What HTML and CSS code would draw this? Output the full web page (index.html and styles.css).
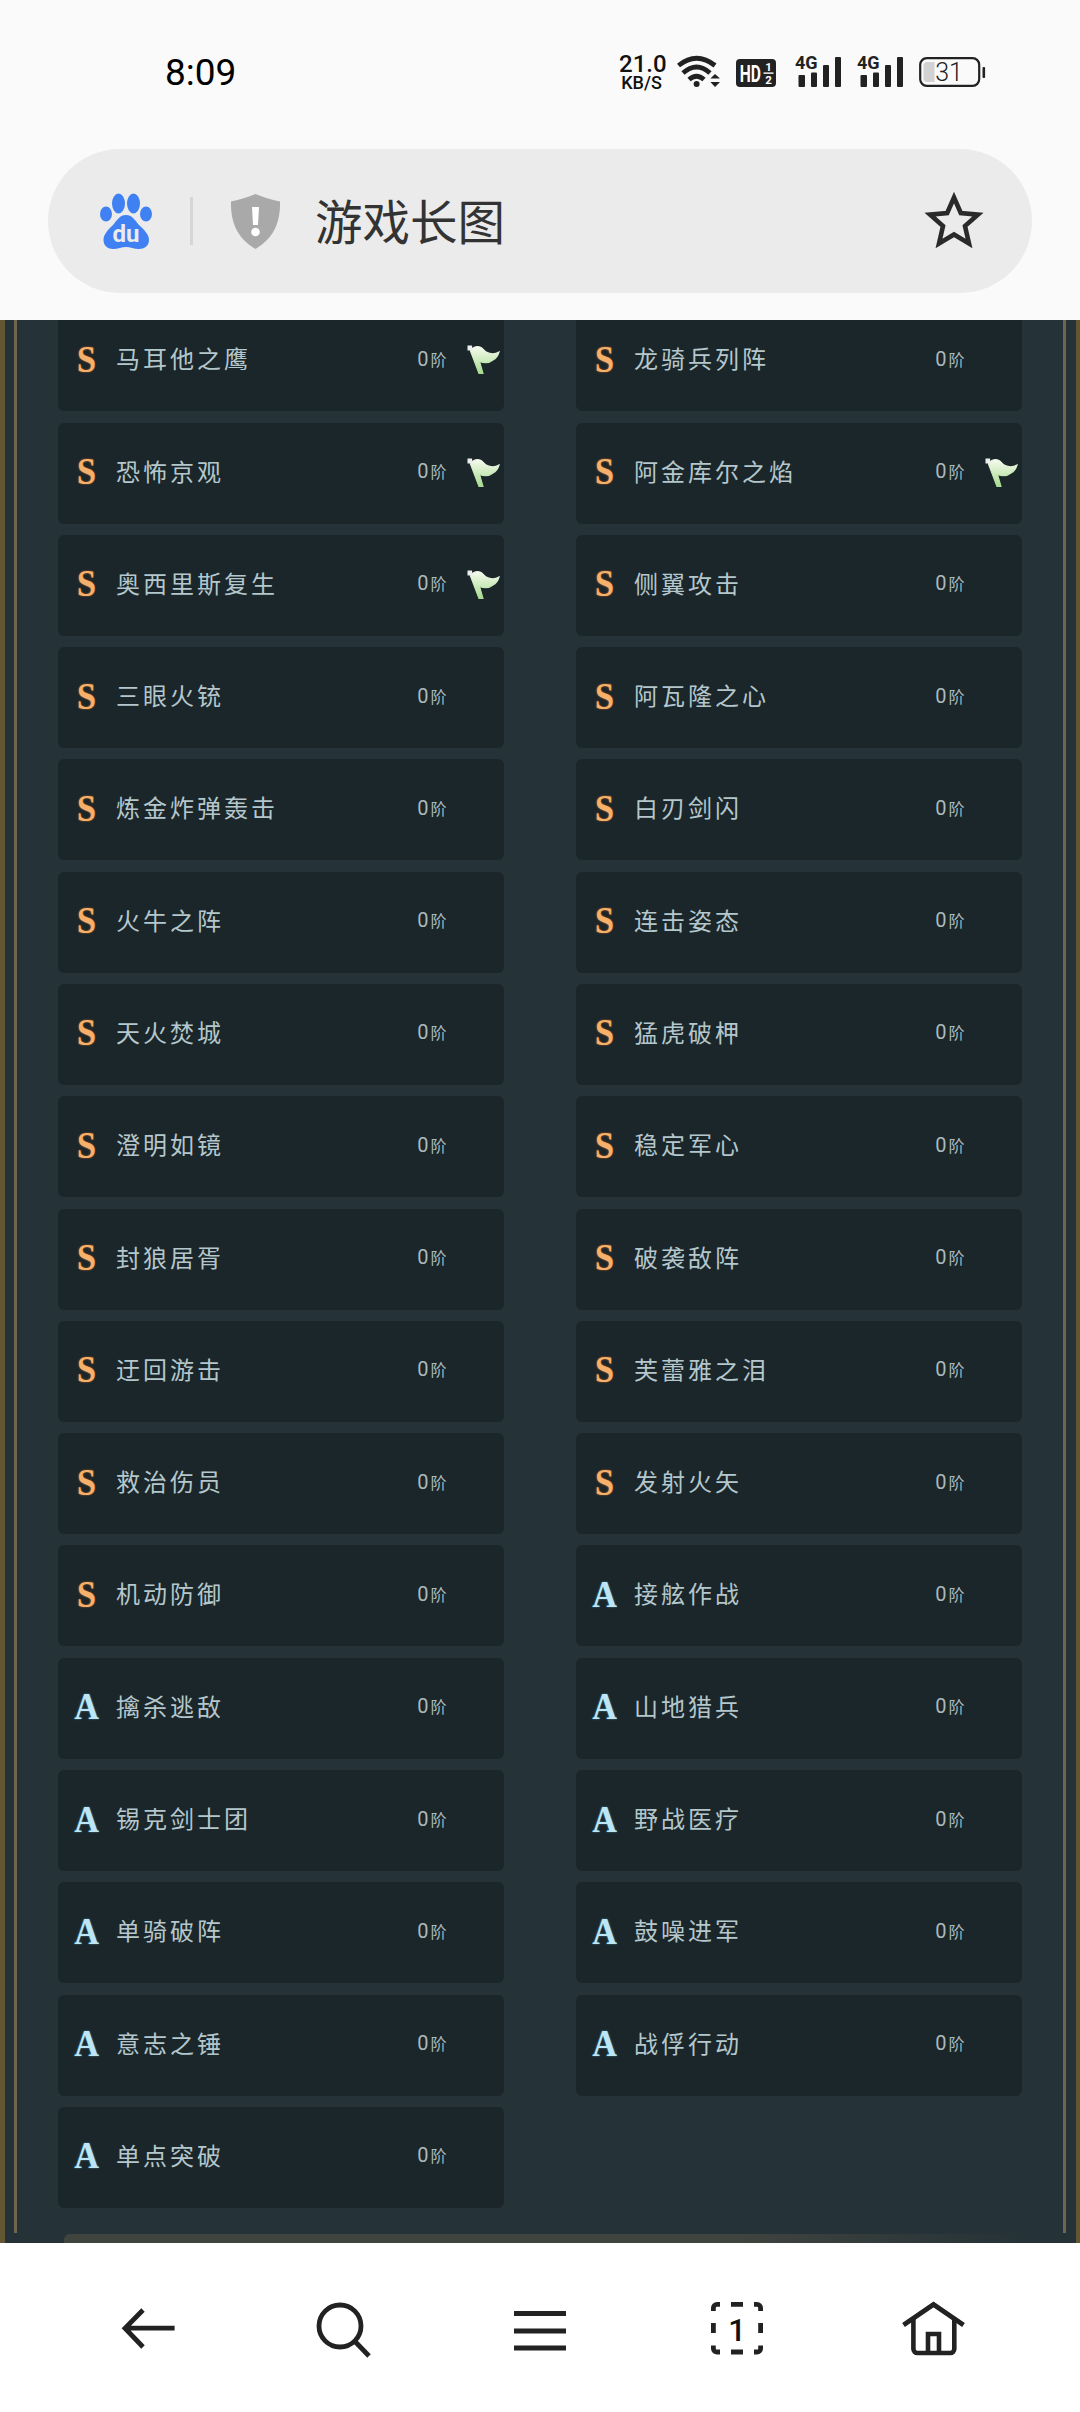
FILE: index.html
```html
<!DOCTYPE html>
<html lang="zh-CN">
<head>
    <meta charset="UTF-8">
    <meta name="viewport" content="width=device-width, initial-scale=1.0">
    <title>游戏长图</title>
    <link rel="stylesheet" href="styles.css">
</head>
<body>
    <svg class="defs" width="0" height="0">
        <defs>
            <linearGradient id="flagFill" x1="0" y1="0" x2="0" y2="1">
                <stop offset="0" stop-color="#f6faee"/>
                <stop offset="1" stop-color="#a6dc8e"/>
            </linearGradient>
            <symbol id="flag" viewBox="0 0 34 30">
                <path d="M4.5 7 C6 3.5 10 2 14 3 C17 4 18 7 20.7 8.3 C24 10 28 11 33 8 C32 11.5 30 14.5 27 16 C24 18.5 19 19.5 13.5 17.5 L17 29.5 L13 29.5 Z" fill="url(#flagFill)" stroke="url(#flagFill)" stroke-width="1.2"/>
                <rect x="1.5" y="1.5" width="4.6" height="5" fill="#eeeeee"/>
            </symbol>
        </defs>
    </svg>

    <header class="topbar">
        <div class="statusbar">
            <div class="time">8:09</div>
            <div class="status-icons">
                <div class="speed"><div class="speed-num">21.0</div><div class="speed-unit">KB/S</div></div>
                <svg class="wifi" width="43" height="32" viewBox="0 0 43 32">
                    <g fill="none" stroke="#222" stroke-width="4.8">
                        <path d="M1.5 10.5 Q19.6 -4 38 10.5"/>
                        <path d="M6 18 Q19.6 6 33 18"/>
                        <path d="M12 24.5 Q19.6 18 27 24.5"/>
                    </g>
                    <circle cx="19.6" cy="29" r="3" fill="#222"/>
                    <path d="M38 19 L43 23.5 H33.4 Z M33.4 27 H43 L38 32 Z" fill="#222"/>
                </svg>
                <svg class="hd" width="40" height="32" viewBox="0 0 40 32">
                    <rect x="0" y="4" width="40" height="28" rx="4" fill="#222"/>
                    <text x="5.5" y="27" class="hd-text" transform="scale(0.68 1)">HD</text>
                    <text x="32.5" y="16" class="hd-frac" text-anchor="middle">1</text>
                    <rect x="27.5" y="17.4" width="10" height="1.4" fill="#fff"/>
                    <text x="32.5" y="29" class="hd-frac" text-anchor="middle">2</text>
                </svg>
                <svg class="signal" width="46" height="32" viewBox="0 0 46 32">
                    <text x="0" y="14" class="sig-text">4G</text>
                    <rect x="3.5" y="20" width="6.5" height="12" rx="1" fill="#222"/>
                    <rect x="16" y="17.5" width="6" height="14.5" rx="1" fill="#222"/>
                    <rect x="28" y="10" width="6" height="22" rx="1" fill="#222"/>
                    <rect x="40" y="2" width="6" height="30" rx="1" fill="#222"/>
                </svg>
                <svg class="signal" width="46" height="32" viewBox="0 0 46 32">
                    <text x="0" y="14" class="sig-text">4G</text>
                    <rect x="3.5" y="20" width="6.5" height="12" rx="1" fill="#222"/>
                    <rect x="16" y="17.5" width="6" height="14.5" rx="1" fill="#222"/>
                    <rect x="28" y="10" width="6" height="22" rx="1" fill="#222"/>
                    <rect x="40" y="2" width="6" height="30" rx="1" fill="#222"/>
                </svg>
                <svg class="battery" width="67" height="32" viewBox="0 0 67 32">
                    <rect x="1.2" y="3.2" width="59" height="27.6" rx="6.5" fill="none" stroke="#222" stroke-width="2.2"/>
                    <path d="M8 7 H15.5 V27 H8 A3.5 3.5 0 0 1 4.5 23.5 V10.5 A3.5 3.5 0 0 1 8 7 Z" fill="#d2d2d2"/>
                    <text x="30" y="26" class="batt-text" text-anchor="middle">31</text>
                    <rect x="63.5" y="12" width="2.6" height="11" rx="1" fill="#222"/>
                </svg>
            </div>
        </div>
        <div class="urlbar">
            <svg class="baidu" width="52" height="56" viewBox="0 0 52 56">
                <g fill="#3f80f3">
                    <ellipse cx="6" cy="21" rx="6" ry="7.5"/>
                    <ellipse cx="18.5" cy="10.5" rx="6.5" ry="10"/>
                    <ellipse cx="33.5" cy="10.5" rx="6.5" ry="10"/>
                    <ellipse cx="46" cy="21" rx="6" ry="7.5"/>
                    <path d="M26 22 C20 22 17 27 13 32 C8 37 3.5 41 3.5 47 C3.5 53 8 56 13 56 C18 56 22 54 26 54 C30 54 34 56 39 56 C44 56 49 53 49 47 C49 41 44 37 39 32 C35 27 32 22 26 22 Z"/>
                </g>
                <text x="26" y="49" class="baidu-text" text-anchor="middle">du</text>
            </svg>
            <div class="divider"></div>
            <svg class="shield" width="49" height="55" viewBox="0 0 49 55">
                <path d="M24.5 0 C32 3 40 6 49 7.5 C49.5 28 43 44 24.5 55 C6 44 -0.5 28 0 7.5 C9 6 17 3 24.5 0 Z" fill="#a9a9a9"/>
                <path d="M21 13 H28 L27 31 H22 Z" fill="#fff"/>
                <circle cx="24.5" cy="38" r="4.3" fill="#fff"/>
            </svg>
            <div class="url-text">游戏长图</div>
            <svg class="star" width="60" height="58" viewBox="0 0 60 58">
                <path d="M30 5.5 L36.8 21 L54 22.6 L41 34 L45 51.5 L30 42.5 L15 51.5 L19 34 L6 22.6 L23.2 21 Z" fill="none" stroke="#2a2a2a" stroke-width="4.6"/>
            </svg>
        </div>
    </header>

    <main class="content">
        <div class="panel">
            <div class="skill-grid">
                <div class="skill"><span class="rank rank-s">S</span><span class="name">马耳他之鹰</span><span class="level">0<small>阶</small></span><svg class="flag"><use href="#flag"/></svg></div>
                <div class="skill"><span class="rank rank-s">S</span><span class="name">龙骑兵列阵</span><span class="level">0<small>阶</small></span></div>
                <div class="skill"><span class="rank rank-s">S</span><span class="name">恐怖京观</span><span class="level">0<small>阶</small></span><svg class="flag"><use href="#flag"/></svg></div>
                <div class="skill"><span class="rank rank-s">S</span><span class="name">阿金库尔之焰</span><span class="level">0<small>阶</small></span><svg class="flag"><use href="#flag"/></svg></div>
                <div class="skill"><span class="rank rank-s">S</span><span class="name">奥西里斯复生</span><span class="level">0<small>阶</small></span><svg class="flag"><use href="#flag"/></svg></div>
                <div class="skill"><span class="rank rank-s">S</span><span class="name">侧翼攻击</span><span class="level">0<small>阶</small></span></div>
                <div class="skill"><span class="rank rank-s">S</span><span class="name">三眼火铳</span><span class="level">0<small>阶</small></span></div>
                <div class="skill"><span class="rank rank-s">S</span><span class="name">阿瓦隆之心</span><span class="level">0<small>阶</small></span></div>
                <div class="skill"><span class="rank rank-s">S</span><span class="name">炼金炸弹轰击</span><span class="level">0<small>阶</small></span></div>
                <div class="skill"><span class="rank rank-s">S</span><span class="name">白刃剑闪</span><span class="level">0<small>阶</small></span></div>
                <div class="skill"><span class="rank rank-s">S</span><span class="name">火牛之阵</span><span class="level">0<small>阶</small></span></div>
                <div class="skill"><span class="rank rank-s">S</span><span class="name">连击姿态</span><span class="level">0<small>阶</small></span></div>
                <div class="skill"><span class="rank rank-s">S</span><span class="name">天火焚城</span><span class="level">0<small>阶</small></span></div>
                <div class="skill"><span class="rank rank-s">S</span><span class="name">猛虎破柙</span><span class="level">0<small>阶</small></span></div>
                <div class="skill"><span class="rank rank-s">S</span><span class="name">澄明如镜</span><span class="level">0<small>阶</small></span></div>
                <div class="skill"><span class="rank rank-s">S</span><span class="name">稳定军心</span><span class="level">0<small>阶</small></span></div>
                <div class="skill"><span class="rank rank-s">S</span><span class="name">封狼居胥</span><span class="level">0<small>阶</small></span></div>
                <div class="skill"><span class="rank rank-s">S</span><span class="name">破袭敌阵</span><span class="level">0<small>阶</small></span></div>
                <div class="skill"><span class="rank rank-s">S</span><span class="name">迂回游击</span><span class="level">0<small>阶</small></span></div>
                <div class="skill"><span class="rank rank-s">S</span><span class="name">芙蕾雅之泪</span><span class="level">0<small>阶</small></span></div>
                <div class="skill"><span class="rank rank-s">S</span><span class="name">救治伤员</span><span class="level">0<small>阶</small></span></div>
                <div class="skill"><span class="rank rank-s">S</span><span class="name">发射火矢</span><span class="level">0<small>阶</small></span></div>
                <div class="skill"><span class="rank rank-s">S</span><span class="name">机动防御</span><span class="level">0<small>阶</small></span></div>
                <div class="skill"><span class="rank rank-a">A</span><span class="name">接舷作战</span><span class="level">0<small>阶</small></span></div>
                <div class="skill"><span class="rank rank-a">A</span><span class="name">擒杀逃敌</span><span class="level">0<small>阶</small></span></div>
                <div class="skill"><span class="rank rank-a">A</span><span class="name">山地猎兵</span><span class="level">0<small>阶</small></span></div>
                <div class="skill"><span class="rank rank-a">A</span><span class="name">锡克剑士团</span><span class="level">0<small>阶</small></span></div>
                <div class="skill"><span class="rank rank-a">A</span><span class="name">野战医疗</span><span class="level">0<small>阶</small></span></div>
                <div class="skill"><span class="rank rank-a">A</span><span class="name">单骑破阵</span><span class="level">0<small>阶</small></span></div>
                <div class="skill"><span class="rank rank-a">A</span><span class="name">鼓噪进军</span><span class="level">0<small>阶</small></span></div>
                <div class="skill"><span class="rank rank-a">A</span><span class="name">意志之锤</span><span class="level">0<small>阶</small></span></div>
                <div class="skill"><span class="rank rank-a">A</span><span class="name">战俘行动</span><span class="level">0<small>阶</small></span></div>
                <div class="skill"><span class="rank rank-a">A</span><span class="name">单点突破</span><span class="level">0<small>阶</small></span></div>
            </div>
            <div class="next-section"></div>
        </div>
    </main>

    <nav class="bottomnav">
        <svg class="nav-icon" viewBox="0 0 64 64">
            <path d="M58.6 32.2 H10 M27 14 L9 32.2 L27 51" fill="none" stroke="#222" stroke-width="4.8"/>
        </svg>
        <svg class="nav-icon" viewBox="0 0 64 64">
            <circle cx="28" cy="30" r="21" fill="none" stroke="#222" stroke-width="4.8"/>
            <path d="M43 45.5 L57 60" fill="none" stroke="#222" stroke-width="4.8"/>
        </svg>
        <svg class="nav-icon" viewBox="0 0 64 64">
            <path d="M6 17.5 H58 M6 35 H58 M6 52 H58" fill="none" stroke="#222" stroke-width="4.8"/>
        </svg>
        <svg class="nav-icon" viewBox="0 0 64 64">
            <path d="M9.4 15 V12 A3.6 3.6 0 0 1 13 8.4 H16 M50 8.4 H53 A3.6 3.6 0 0 1 56.6 12 V15 M56.6 49.5 V52.4 A3.6 3.6 0 0 1 53 56 H50 M16 56 H13 A3.6 3.6 0 0 1 9.4 52.4 V49.5 M27 8.4 H39 M27 56 H39 M9.4 27 V37 M56.6 27 V37" fill="none" stroke="#222" stroke-width="4.8"/>
            <text x="33" y="44.5" class="tab-count" text-anchor="middle">1</text>
        </svg>
        <svg class="nav-icon" viewBox="0 0 64 64">
            <path d="M3.5 29 L33.5 8.5 L63.5 29" fill="none" stroke="#222" stroke-width="4.8"/>
            <path d="M13.4 23 V53 A4 4 0 0 0 17.4 57 H50.3 A4 4 0 0 0 54.3 53 V23 M28 57 V38 H39 V57" fill="none" stroke="#222" stroke-width="4.6"/>
        </svg>
    </nav>
</body>
</html>
```

FILE: styles.css
```css
html, body {
    margin: 0;
    padding: 0;
}
body {
    width: 1080px;
    height: 2412px;
    overflow: hidden;
    display: flex;
    flex-direction: column;
    font-family: Roboto, "Noto Sans CJK SC", sans-serif;
    background-color: #fff;
}
.defs {
    position: absolute;
}

/* top */
.topbar {
    height: 320px;
    flex: none;
    box-sizing: border-box;
    background-color: #fafafa;
    padding: 0 48px;
}
.statusbar {
    height: 149px;
    display: flex;
    justify-content: space-between;
    padding: 0 46px 0 117px;
}
.time {
    font-size: 37px;
    line-height: 43px;
    margin-top: 51px;
    color: #000;
}
.status-icons {
    display: flex;
    align-items: flex-start;
    gap: 16px;
    padding-top: 55px;
}
.speed {
    width: 45px;
    text-align: center;
    color: #111;
    font-weight: 500;
    margin-right: -3px;
}
.speed-num {
    font-size: 24px;
    line-height: 18px;
}
.speed-unit {
    font-size: 18px;
    line-height: 18px;
    margin-top: 1px;
}
.signal {
    overflow: visible;
}
.hd {
    margin-right: 3px;
}
.hd-text {
    font: 700 23px Roboto, sans-serif;
    fill: #fff;
}
.hd-frac {
    font: 700 11.5px Roboto, sans-serif;
    fill: #fff;
}
.sig-text {
    font: 700 18px Roboto, sans-serif;
    fill: #222;
}
.batt-text {
    font: 300 25px Roboto, sans-serif;
    fill: #222;
}
.urlbar {
    height: 144px;
    box-sizing: border-box;
    display: flex;
    align-items: center;
    padding: 0 48px 0 52px;
    border-radius: 72px;
    background-color: #ebebeb;
}
.divider {
    width: 3px;
    height: 48px;
    margin: 0 38px;
    background-color: #d6d6d6;
}
.baidu-text {
    font: 700 24px Roboto, sans-serif;
    fill: #ebebeb;
}
.url-text {
    flex: 1;
    margin: -2px 0 0 35px;
    font-size: 47.5px;
    line-height: 60px;
    color: #333;
    font-family: "Noto Sans CJK SC", sans-serif;
}

/* list */
.content {
    flex: 1;
    min-height: 0;
    overflow: hidden;
    box-sizing: border-box;
    border-left: 5px solid #635633;
    border-right: 4px solid #635633;
    background-color: #253237;
}
.panel {
    height: 100%;
    margin: 0 10px 0 9px;
    box-sizing: border-box;
    border-left: 3px solid #70654f;
    border-right: 3px solid #70654f;
    background-color: #253237;
}
.skill-grid {
    display: grid;
    grid-template-columns: 445.5px 445.5px;
    grid-auto-rows: 101px;
    column-gap: 72.5px;
    row-gap: 11.3px;
    margin-top: -9.8px;
    padding-left: 41px;
}
.skill {
    display: grid;
    grid-template-columns: 59px 1fr auto 57px;
    align-items: center;
    border-radius: 6px;
    background-color: #1b262a;
    font-family: "Noto Sans CJK SC", sans-serif;
}
.rank {
    font-family: "Liberation Serif", serif;
    font-weight: 700;
    font-size: 38px;
    line-height: 40px;
    text-align: center;
    transform: translate(-1px, -2px) scaleX(0.9);
}
.rank-s {
    color: #f5b06c;
    text-shadow: 0 0 2px #c96a22;
}
.rank-a {
    color: #bce6f5;
    text-shadow: 0 0 2px #4f93ad;
}
.name {
    margin: -6px 0 0 -1px;
    font-size: 24px;
    letter-spacing: 3px;
    color: #b4c7cc;
}
.level {
    margin-top: -4px;
    font-family: Roboto, "Noto Sans CJK SC", sans-serif;
    font-size: 20px;
    color: #a9babd;
}
.level small {
    font-size: 16px;
    margin-left: 2px;
}
.flag {
    grid-column: 4;
    grid-row: 1;
    width: 34px;
    height: 30px;
    margin-left: 19px;
    margin-top: -3px;
    filter: blur(0.4px);
}
.next-section {
    height: 40px;
    margin: 26px 40px 0 47px;
    border-radius: 6px 6px 0 0;
    background: linear-gradient(90deg, #40443f 0%, #40443f 70%, #253237 100%);
}

/* bottom */
.bottomnav {
    height: 169px;
    flex: none;
    display: grid;
    grid-template-columns: repeat(5, 196px);
    padding: 0 50px;
    align-items: center;
    justify-items: center;
    background-color: #fff;
}
.nav-icon {
    width: 64px;
    height: 64px;
    overflow: visible;
}
.tab-count {
    font: 500 31px Roboto, sans-serif;
    fill: #111;
}
```
